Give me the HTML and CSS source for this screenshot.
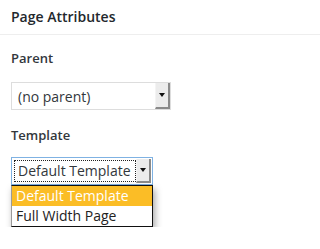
FILE: index.html
```html
<!DOCTYPE html>
<html>
<head>
<meta charset="utf-8">
<link rel="stylesheet" href="styles.css">
</head>
<body>
<div class="box">
  <div class="box-head">Page Attributes</div>
  <div class="box-body">
    <div class="label label-parent">Parent</div>
    <div class="select select-parent">
      <div class="select-value">(no parent)</div>
      <div class="select-btn"><span class="arrow"></span></div>
    </div>
    <div class="label label-template">Template</div>
    <div class="dropdown">
      <div class="select select-template">
        <div class="select-value"><span class="focus-ring">Default Template</span></div>
        <div class="select-btn"><span class="arrow"></span></div>
      </div>
      <ul class="options">
        <li class="option option-active">Default Template</li>
        <li class="option">Full Width Page</li>
      </ul>
    </div>
  </div>
</div>
</body>
</html>
```
FILE: styles.css
```css
html, body {
  margin: 0;
  padding: 0;
  background: #ffffff;
}
body {
  font-family: "Open Sans", "Noto Sans", sans-serif;
  color: #23282d;
}
.box-head {
  padding: 8px 11px;
  font-size: 14px;
  line-height: 18px;
  font-weight: 600;
  color: #23282d;
  border-bottom: 1px solid #eeeeee;
}
.box-body {
  padding: 0 11px;
}
.label {
  font-size: 13px;
  line-height: 18px;
  font-weight: 600;
  color: #32373c;
}
.label-parent {
  margin-top: 14px;
  margin-bottom: 15px;
}
.label-template {
  margin-top: 16px;
  margin-bottom: 13px;
}
.select {
  display: flex;
  box-sizing: border-box;
  height: 28px;
  background: #ffffff;
  border: 1px solid #dddddd;
}
.select-parent {
  width: 160px;
}
.select-value {
  flex: 1;
  display: flex;
  align-items: center;
  padding-left: 6px;
  font-size: 14px;
  color: #32373c;
  white-space: nowrap;
}
.select-btn {
  width: 15px;
  box-sizing: border-box;
  background: #ececec;
  border-right: 2px solid #8a8a8a;
  border-bottom: 2px solid #8a8a8a;
  border-left: 1px solid #f4f4f4;
  display: flex;
  align-items: center;
  justify-content: center;
}
.arrow {
  width: 0;
  height: 0;
  border-left: 3px solid transparent;
  border-right: 3px solid transparent;
  border-top: 4px solid #111111;
}
.dropdown {
  width: 142px;
}
.select-template {
  border-color: #7fb2e3;
  padding: 1px;
}
.select-template .select-value {
  padding-left: 1px;
}
.focus-ring {
  display: block;
  box-sizing: border-box;
  width: 122px;
  height: 22px;
  line-height: 20px;
  border: 1px dotted #222222;
  padding-left: 3px;
}
.options {
  list-style: none;
  margin: 0;
  padding: 0;
  border: 1px solid #111111;
  border-left-color: #9a9a9a;
  box-shadow: 2px 4px 7px rgba(0, 0, 0, 0.35);
  background: #ffffff;
}
.option {
  height: 20px;
  line-height: 20px;
  font-size: 14px;
  padding-left: 4px;
  color: #222222;
  white-space: nowrap;
}
.option-active {
  background: #fbbd26;
  color: #ffffff;
}
```
